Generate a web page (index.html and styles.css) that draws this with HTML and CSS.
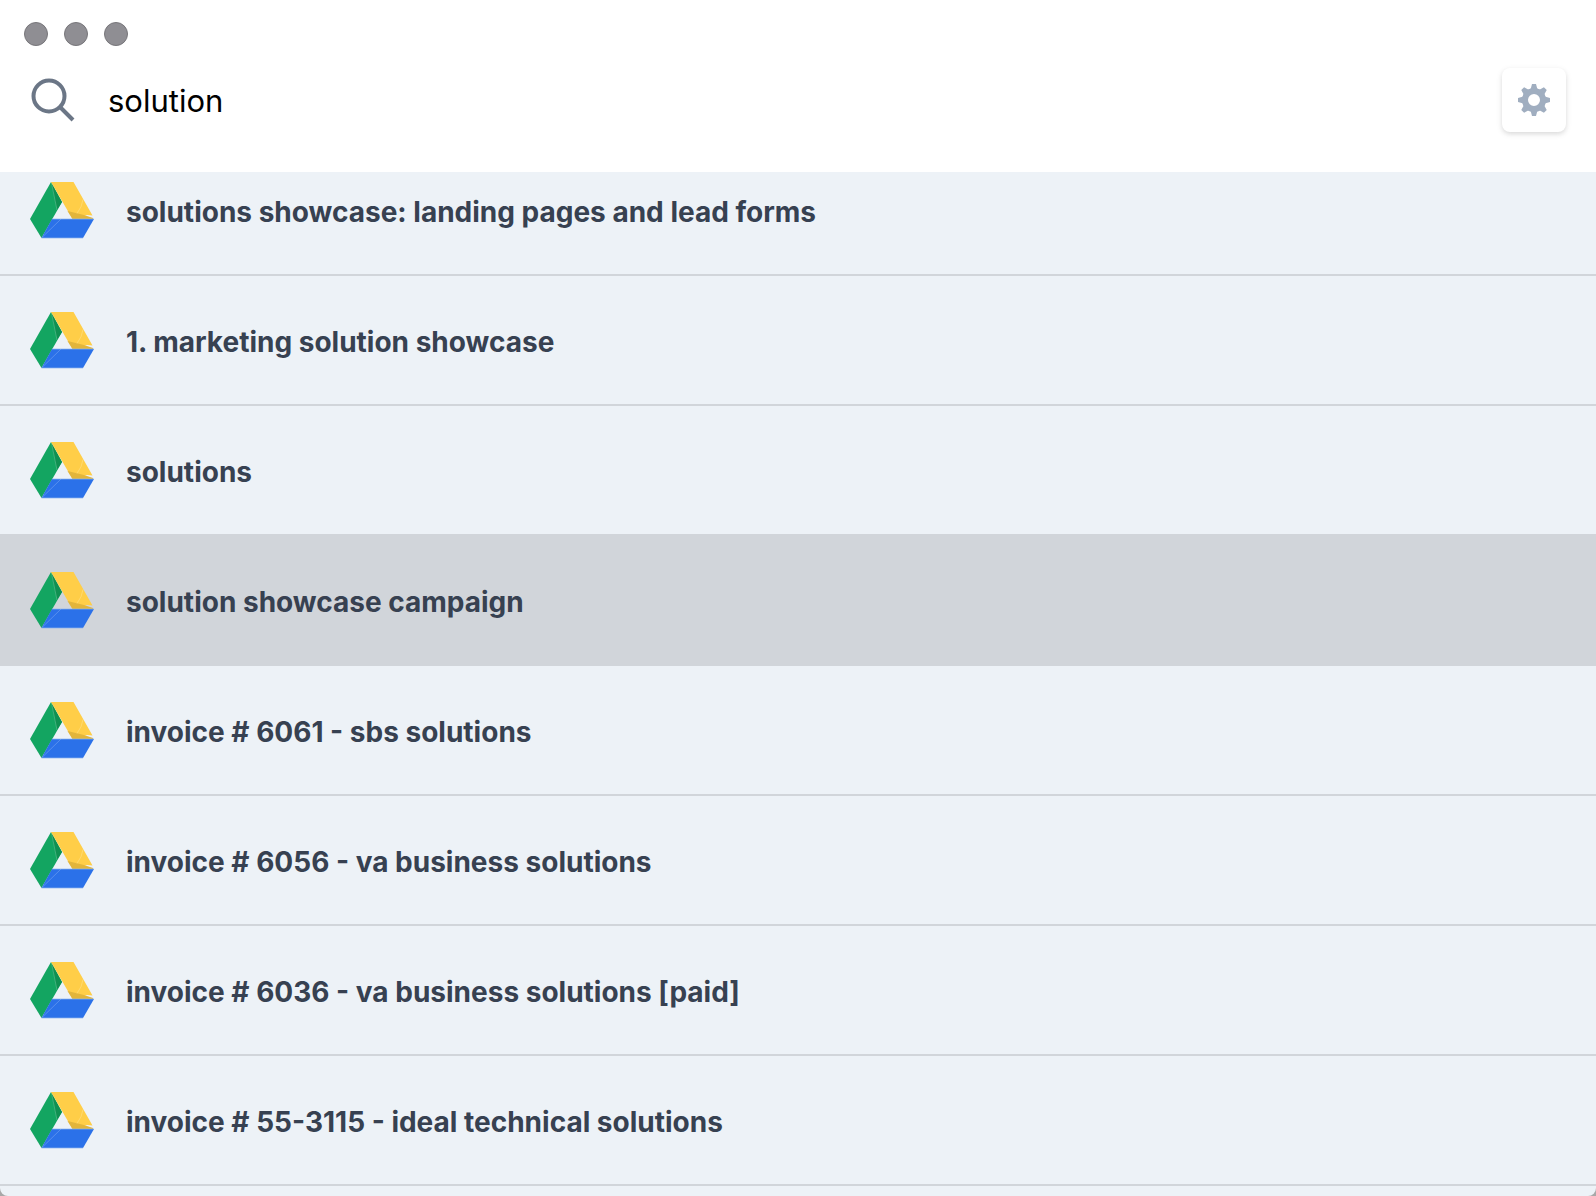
FILE: index.html
```
<!DOCTYPE html>
<html lang="en">

<head>
  <meta charset="UTF-8">
  <meta name="viewport" content="width=device-width, initial-scale=1.0">
  <title>Search</title>
  <link rel="stylesheet" href="styles.css">
</head>

<body>

  <!-- Drive logo, reused by every result -->
  <svg class="sprite" aria-hidden="true">
    <symbol id="drive" viewBox="0 0 64 58">
      <path fill="#13a561" d="M21 1L32 21L11.500 57L0 38z" />
      <path fill="#0f9152" d="M21 1L32 21L27 29z" />
      <path fill="#2b71e9" d="M22 38H64L53 57H11.500z" />
      <path fill="#ffce48" d="M21 1H43.500L62.500 34.500L57 34L42.500 38z" />
      <path fill="#e2b53b" d="M37.500 30L54 34L63 37L63 38H42.500z" />
      <path fill="none" stroke="#ffffff" stroke-opacity="0.350" stroke-width="0.600" d="M12.500 56L31 38M21.500 2L27 29M47 32.500Q52 26 53 18.500" />
      <path fill="none" stroke="#8db4ef" stroke-width="0.700" d="M22 38H64M11.500 57H53" />
    </symbol>
  </svg>

  <div class="window">
    <!-- Header -->
    <header class="header">
      <div class="window-controls">
        <button type="button" class="dot" aria-label="Close"></button>
        <button type="button" class="dot" aria-label="Minimize"></button>
        <button type="button" class="dot" aria-label="Zoom"></button>
      </div>
      <div class="search-bar">
        <label for="searchInput" class="search-label" aria-label="Search">
          <svg class="search-icon" viewBox="0 0 46 44" aria-hidden="true">
            <circle cx="19" cy="18" r="15.500" />
            <path d="M30 29L43 42" />
          </svg>
        </label>
        <input type="text" id="searchInput" class="search-input" value="solution" spellcheck="false">
        <button type="button" class="btn-settings" aria-label="Settings">
          <svg class="gear-icon" viewBox="-16 -16 32 32" aria-hidden="true">
            <circle class="gear-ring" r="9" />
            <g id="teeth">
              <path d="M-2 -16H2L3.200 -11.500L5 -10H-5L-3.200 -11.500z" />
              <path d="M-2 16H2L3.200 11.500L5 10H-5L-3.200 11.500z" />
              <path d="M-16 -2V2L-11.500 3.200L-10 5V-5L-11.500 -3.200z" />
              <path d="M16 -2V2L11.500 3.200L10 5V-5L11.500 -3.200z" />
            </g>
            <use href="#teeth" transform="rotate(45)" />
          </svg>
        </button>
      </div>
    </header>

    <!-- Results -->
    <ul class="results" id="results">
      <li class="result">
        <svg class="result-icon" aria-hidden="true"><use href="#drive" /></svg>
        <span class="result-title">solutions showcase: landing pages and lead forms</span>
      </li>
      <li class="result">
        <svg class="result-icon" aria-hidden="true"><use href="#drive" /></svg>
        <span class="result-title">1. marketing solution showcase</span>
      </li>
      <li class="result">
        <svg class="result-icon" aria-hidden="true"><use href="#drive" /></svg>
        <span class="result-title">solutions</span>
      </li>
      <li class="result selected">
        <svg class="result-icon" aria-hidden="true"><use href="#drive" /></svg>
        <span class="result-title">solution showcase campaign</span>
      </li>
      <li class="result">
        <svg class="result-icon" aria-hidden="true"><use href="#drive" /></svg>
        <span class="result-title">invoice # 6061 - sbs solutions</span>
      </li>
      <li class="result">
        <svg class="result-icon" aria-hidden="true"><use href="#drive" /></svg>
        <span class="result-title">invoice # 6056 - va business solutions</span>
      </li>
      <li class="result">
        <svg class="result-icon" aria-hidden="true"><use href="#drive" /></svg>
        <span class="result-title">invoice # 6036 - va business solutions [paid]</span>
      </li>
      <li class="result">
        <svg class="result-icon" aria-hidden="true"><use href="#drive" /></svg>
        <span class="result-title">invoice # 55-3115 - ideal technical solutions</span>
      </li>
    </ul>
  </div>

  <script>
    const results = document.getElementById('results');

    results.scrollTop = 26;
  </script>

</body>

</html>
```

FILE: styles.css
```
html {
  background: #a8a8a8;
}

body {
  font-family: Inter, "Liberation Sans", sans-serif;
  margin: 0;
}

.sprite {
  position: absolute;
  width: 0;
  height: 0;
}

.window {
  display: flex;
  flex-direction: column;
  height: 100vh;
  background: #edf2f7;
  border-radius: 0 0 8px 8px;
  overflow: hidden;
}

/* Header */
.header {
  flex-shrink: 0;
  background: #fff;
  padding: 22px 30px 40px;
}

.window-controls {
  display: flex;
  gap: 16px;
  margin-left: -6px;
  margin-bottom: 22px;
}

.dot {
  width: 24px;
  height: 24px;
  padding: 0;
  border: 1px solid #77767a;
  border-radius: 50%;
  background: #8f8e93;
}

.search-bar {
  display: flex;
  align-items: center;
}

.search-label {
  display: flex;
  margin-right: 32px;
}

.search-icon {
  width: 46px;
  height: 44px;
  fill: none;
  stroke: #6b7686;
  stroke-width: 4;
}

.search-input {
  flex: 1;
  min-width: 0;
  padding: 2px 0 0;
  border: none;
  outline: none;
  font-family: inherit;
  font-size: 31px;
  line-height: 48px;
  color: #000;
}

.btn-settings {
  display: flex;
  align-items: center;
  justify-content: center;
  width: 64px;
  height: 64px;
  padding: 0;
  border: none;
  border-radius: 8px;
  background: #fff;
  box-shadow: 0 2px 6px rgba(0, 0, 0, 0.1), 0 2px 4px rgba(0, 0, 0, 0.06);
  cursor: pointer;
}

.gear-icon {
  width: 32px;
  height: 32px;
  fill: #a0aec0;
}

.gear-ring {
  fill: none;
  stroke: #a0aec0;
  stroke-width: 6;
}

/* Results */
.results {
  flex: 1;
  min-height: 0;
  margin: 0;
  padding: 0 0 64px;
  list-style: none;
  overflow-y: auto;
  scrollbar-width: none;
}

.result {
  display: flex;
  align-items: center;
  gap: 32px;
  height: 128px;
  padding: 0 30px;
  border-bottom: 2px solid #d1d5da;
}

.result.selected {
  background: #d1d5da;
}

.result-icon {
  flex-shrink: 0;
  width: 64px;
  height: 58px;
}

.result-title {
  padding-top: 4px;
  font-size: 28px;
  font-weight: 700;
  line-height: 42px;
  color: #374151;
}
```
